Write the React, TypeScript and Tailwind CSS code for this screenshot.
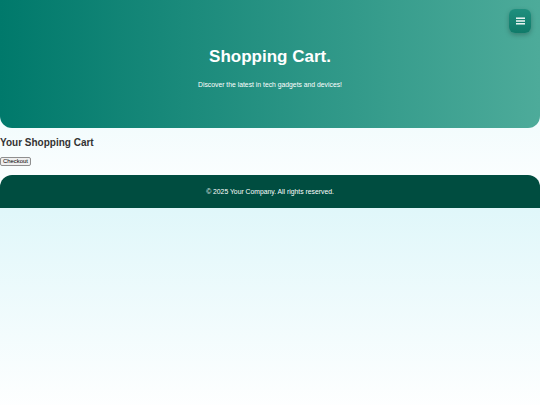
import React from "react";

export default function App() {
  return (
    <div className="min-h-[405px] bg-[linear-gradient(to_bottom,#e0f7fa,#ffffff)] bg-[length:100%_208px] font-['Liberation_Sans',Arial,sans-serif]">
      <header className="relative h-[128px] rounded-b-[12px] bg-[linear-gradient(to_right,#00796b,#4dab9a)] flex flex-col items-center pt-[47px]">
        <h1 className="text-[17px] leading-[20px] font-bold text-white">Shopping Cart.</h1>
        <p className="mt-[13px] text-[6.8px] leading-[9px] text-white">Discover the latest in tech gadgets and devices!</p>
        <button className="absolute right-[9px] top-[9px] w-[22px] h-[24px] rounded-[6px] bg-[linear-gradient(to_bottom,#1f8f7e,#107a69)] shadow-[0_2px_5px_rgba(0,0,0,0.25)] flex items-center justify-center">
          <svg width="9" height="8" viewBox="0 0 9 8">
            <rect x="0" y="0.5" width="9" height="1.4" fill="#fff" />
            <rect x="0" y="3.3" width="9" height="1.4" fill="#fff" />
            <rect x="0" y="6.1" width="9" height="1.4" fill="#fff" />
          </svg>
        </button>
      </header>
      <main className="pt-[8px]">
        <h2 className="text-[10px] leading-[14px] font-bold text-[#333]">Your Shopping Cart</h2>
        <button className="mt-[7px] h-[9px] px-[2px] flex items-center bg-[#efefef] border border-[#8f8f8f] rounded-[2px] text-[5.9px] leading-[7px] text-black">Checkout</button>
      </main>
      <footer className="mt-[9px] h-[33px] rounded-t-[12px] bg-[#004d40] flex items-center justify-center pt-[1px] text-[6.8px] text-white">
        © 2025 Your Company. All rights reserved.
      </footer>
    </div>
  );
}
